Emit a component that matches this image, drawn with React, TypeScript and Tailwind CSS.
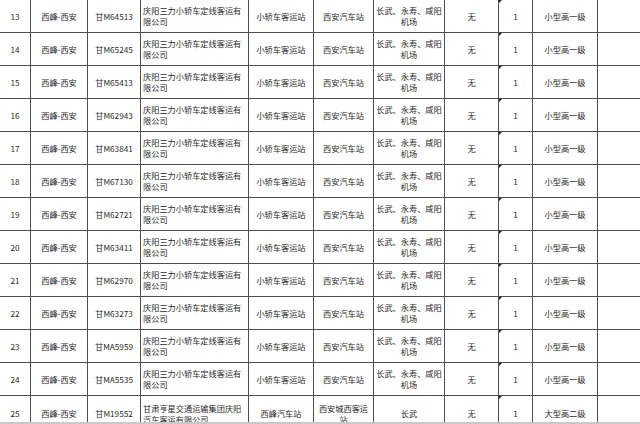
import React from 'react';

type Row = {
  no: number;
  route: string;
  plate: string;
  company: string[];
  depart: string;
  arrive: string[];
  stops: string[];
  mid: string;
  count: string;
  grade: string;
};

const sanli = ['庆阳三力小轿车定线客运有', '限公司'];
const stops = ['长武、永寿、咸阳', '机场'];

const plates = [
  '甘M64513', '甘M65245', '甘M65413', '甘M62943', '甘M63841', '甘M67130',
  '甘M62721', '甘M63411', '甘M62970', '甘M63273', '甘MA5959', '甘MA5535',
];

const rows: Row[] = plates.map((plate, i) => ({
  no: 13 + i,
  route: '西峰-西安',
  plate,
  company: sanli,
  depart: '小轿车客运站',
  arrive: ['西安汽车站'],
  stops,
  mid: '无',
  count: '1',
  grade: '小型高一级',
}));

rows.push({
  no: 25,
  route: '西峰-西安',
  plate: '甘M19552',
  company: ['甘肃亨星交通运输集团庆阳', '汽车客运有限公司'],
  depart: '西峰汽车站',
  arrive: ['西安城西客运', '站'],
  stops: ['长武'],
  mid: '无',
  count: '1',
  grade: '大型高二级',
});

function Cell({
  children,
  left,
  last,
  marker,
}: {
  children?: React.ReactNode;
  left?: boolean;
  last?: boolean;
  marker?: boolean;
}) {
  return (
    <div
      className={
        'relative flex items-center border-b border-[#4d4d4d] ' +
        (last ? '' : 'border-r ') +
        (left ? 'justify-start pl-[2px] text-left' : 'justify-center text-center')
      }
    >
      {marker && (
        <span className="absolute left-0 top-0 h-0 w-0 border-t-[3px] border-r-[3px] border-t-[#222] border-r-transparent" />
      )}
      <div className="leading-[11px]">{children}</div>
    </div>
  );
}

function Lines({ items }: { items: string[] }) {
  return (
    <>
      {items.map((t, i) => (
        <div key={i}>{t}</div>
      ))}
    </>
  );
}

export default function App() {
  return (
    <div
      className="flex h-[424px] w-[640px] flex-col overflow-hidden bg-white text-[8.2px] text-[#2a2a2a]"
      style={{ fontFamily: '"Noto Sans CJK SC", "Noto Sans", sans-serif' }}
    >
      <div className="min-h-0 flex-1 overflow-hidden">
        <div className="grid grid-cols-[31px_57px_53px_108px_65px_60px_71px_54px_34px_65px_1fr] auto-rows-[33px] [&>div:nth-last-child(-n+11)]:h-[36px]">
          {rows.map((r) => (
            <React.Fragment key={r.no}>
              <Cell>{r.no}</Cell>
              <Cell>{r.route}</Cell>
              <Cell>{r.plate}</Cell>
              <Cell left>
                <Lines items={r.company} />
              </Cell>
              <Cell>{r.depart}</Cell>
              <Cell>
                <Lines items={r.arrive} />
              </Cell>
              <Cell>
                <Lines items={r.stops} />
              </Cell>
              <Cell>{r.mid}</Cell>
              <Cell marker>{r.count}</Cell>
              <Cell>{r.grade}</Cell>
              <Cell last />
            </React.Fragment>
          ))}
        </div>
      </div>
      <div className="h-[2px] bg-[#c9c9c9]" />
    </div>
  );
}
